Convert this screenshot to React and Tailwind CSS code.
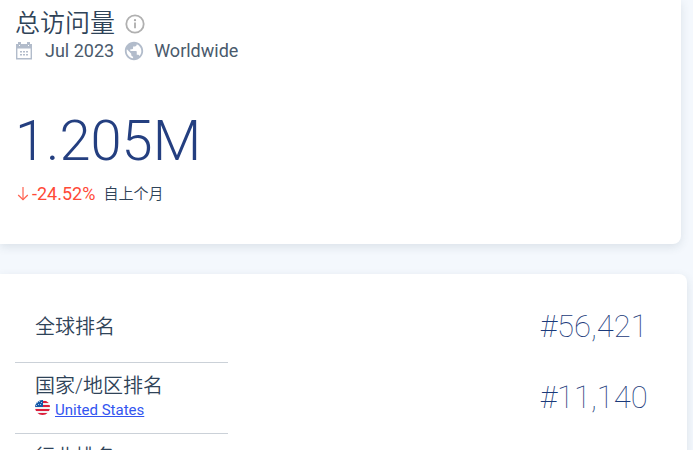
import { MdPublic } from 'react-icons/md';

const RANKS = [
  { title: '全球排名', value: '#56,421' },
  { title: '国家/地区排名', value: '#11,140', country: 'United States' },
  { title: '行业排名', value: '' },
];

function InfoIcon() {
  return (
    <svg width="20" height="20" viewBox="0 0 20 20" fill="none" aria-hidden="true">
      <circle cx="10" cy="10" r="8.7" stroke="#b0b0b0" strokeWidth="1.8" />
      <path d="M10 8.6v5.6" stroke="#a8a8a8" strokeWidth="1.7" />
      <circle cx="10" cy="6.2" r="1.1" fill="#a8a8a8" />
    </svg>
  );
}

function CalendarIcon() {
  return (
    <svg width="18" height="18" viewBox="0 0 18 18" fill="none" aria-hidden="true">
      <path d="M1.7 2.7h14.6v14H1.7z" stroke="#b2bccb" strokeWidth="1.4" />
      <path d="M1 2h16v4.5H1zM3 0h3v2H3zM12 0h3v2h-3z" fill="#b2bccb" />
      <path d="M4 3h1v1H4zM13 3h1v1h-1z" fill="#fff" />
      <path
        d="M5 9h2v1.5H5zM8 9h2v1.5H8zM11 9h2v1.5h-2zM5 12h2v1.5H5zM8 12h2v1.5H8zM11 12h2v1.5h-2z"
        fill="#b2bccb"
      />
    </svg>
  );
}

function ArrowDown() {
  return (
    <svg width="12" height="16" viewBox="0 0 12 16" fill="none" aria-hidden="true">
      <path d="M6 1v13" stroke="#ff8a7c" strokeWidth="1.6" />
      <path d="M1.2 9L6 13.6 10.8 9" stroke="#ff6250" strokeWidth="1.3" />
    </svg>
  );
}

function UsFlag() {
  return (
    <svg width="15" height="15" viewBox="0 0 15 15" aria-hidden="true">
      <clipPath id="flag">
        <circle cx="7.5" cy="7.5" r="7.5" />
      </clipPath>
      <g clipPath="url(#flag)">
        <path d="M0 0h15v15H0z" fill="#f2f0f2" />
        <path d="M7 1h8v2H7zM7 5h8v2H7zM0 9h15v2H0zM0 13h15v2H0z" fill="#dc1f3c" />
        <path d="M0 0h8v7H0z" fill="#1458a8" />
        <path
          d="M2 2h1v1H2zM4 1h1v1H4zM6 2h1v1H6zM3 4h1v1H3zM5 4h1v1H5zM1 5h1v1H1z"
          fill="#a9c6e6"
        />
      </g>
    </svg>
  );
}

function RankRow({ rank, single }) {
  return (
    <li className="flex h-[71px] items-stretch justify-between">
      <div
        className={`flex w-[213px] flex-col border-b border-[#cbd1d8] pl-5 ${single ? 'justify-center' : 'pt-[11px]'}`}
      >
        <h3 className="text-xl leading-6 font-[350]">{rank.title}</h3>
        {rank.country && (
          <div className="flex h-6 items-start gap-[5px] pt-0.5">
            <UsFlag />
            <a href="#us" className="text-[15px] leading-5 text-[#3355f0] underline">
              {rank.country}
            </a>
          </div>
        )}
      </div>
      <p className="w-[108px] pt-[15px] text-[31px] leading-10 font-thin text-[#1b3a7a]">
        {rank.value}
      </p>
    </li>
  );
}

export default function App() {
  return (
    <div className="h-screen overflow-hidden bg-[#f4f8fd] font-[Roboto,'Noto_Sans_CJK_SC',sans-serif] text-[#2f4358]">
      <section className="mr-3 rounded-br-lg bg-white pt-2 pb-[38px] pl-[15px] shadow-[0_3px_10px_rgba(42,62,82,0.12)]">
        <div className="flex items-center gap-[10px]">
          <h2 className="text-[25px] leading-8 font-[350]">总访问量</h2>
          <InfoIcon />
        </div>
        <div className="flex items-center text-lg leading-[22px] text-[#4a5a6c]">
          <CalendarIcon />
          <span className="ml-3">Jul 2023</span>
          <MdPublic className="mx-[9px] size-[22px] text-[#b2bccb]" />
          <span>Worldwide</span>
        </div>
        <p className="mt-[46px] text-[56px] leading-[66px] font-light text-[#243f80]">1.205M</p>
        <div className="mt-2 flex items-center text-lg leading-6">
          <span className="flex items-center gap-[3px] pl-0.5 text-[#ff4a37]">
            <ArrowDown />
            -24.52%
          </span>
          <span className="ml-2 text-[15px] font-[350]">自上个月</span>
        </div>
      </section>

      <section className="mt-[30px] mr-[6px] rounded-tr-lg bg-white pt-[18px] pr-[39px] pb-5 pl-[15px] shadow-[0_3px_10px_rgba(42,62,82,0.12)]">
        <ul>
          {RANKS.map((rank, i) => (
            <RankRow key={rank.title} rank={rank} single={i === 0} />
          ))}
        </ul>
      </section>
    </div>
  );
}
